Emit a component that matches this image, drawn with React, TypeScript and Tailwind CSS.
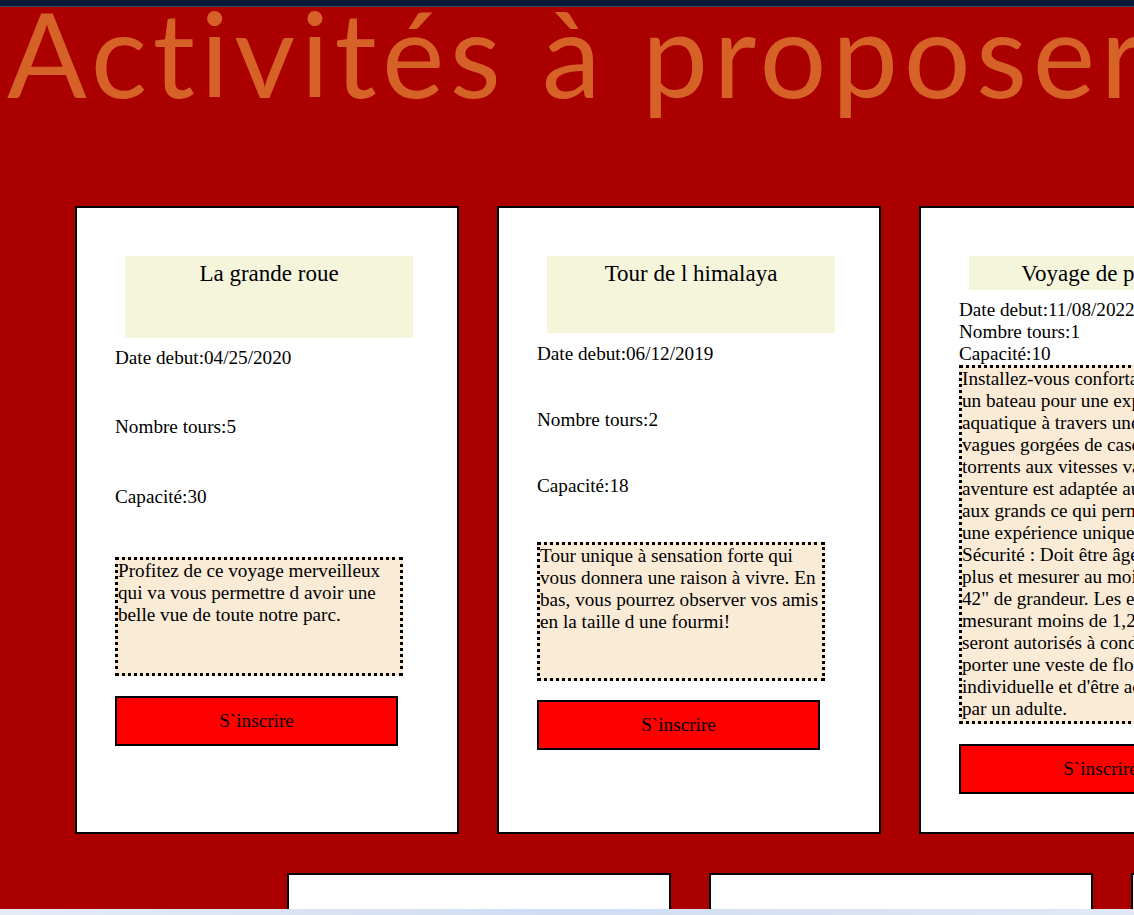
import React from 'react';

type Activity = {
  id: string;
  title: string;
  date: string;
  tours: number;
  capacite: number;
  lines: string[];
  titleCls: string;
  dateCls: string;
  toursCls: string;
  capCls: string;
  descCls: string;
  btnCls: string;
};

const ACTIVITIES: Activity[] = [
  {
    id: 'a1',
    title: 'La grande roue',
    date: '04/25/2020',
    tours: 5,
    capacite: 30,
    lines: [
      'Profitez de ce voyage merveilleux',
      'qui va vous permettre d avoir une',
      'belle vue de toute notre parc.',
    ],
    titleCls: 'mt-[48px] h-[82px]',
    dateCls: 'mt-[9px]',
    toursCls: 'mt-[47px]',
    capCls: 'mt-[48px]',
    descCls: 'mt-[49px] h-[119px]',
    btnCls: 'mt-[20px]',
  },
  {
    id: 'a2',
    title: 'Tour de l himalaya',
    date: '06/12/2019',
    tours: 2,
    capacite: 18,
    lines: [
      'Tour unique à sensation forte qui',
      'vous donnera une raison à vivre. En',
      'bas, vous pourrez observer vos amis',
      'en la taille d une fourmi!',
    ],
    titleCls: 'mt-[48px] h-[77px]',
    dateCls: 'mt-[10px]',
    toursCls: 'mt-[44px]',
    capCls: 'mt-[44px]',
    descCls: 'mt-[45px] h-[139px]',
    btnCls: 'mt-[19px]',
  },
  {
    id: 'a3',
    title: 'Voyage de plaisance',
    date: '11/08/2022',
    tours: 1,
    capacite: 10,
    lines: [
      'Installez-vous confortablement dans',
      'un bateau pour une expédition',
      'aquatique à travers une rivière de',
      'vagues gorgées de cascades et de',
      'torrents aux vitesses variables. Cette',
      'aventure est adaptée aux petits comme',
      'aux grands ce qui permet de vivre',
      'une expérience unique en famille.',
      'Sécurité : Doit être âgé de 3 ans et',
      'plus et mesurer au moins 1,07 m /',
      '42" de grandeur. Les enfants',
      'mesurant moins de 1,2 m / 48" ne',
      'seront autorisés à condition de',
      'porter une veste de flottaison',
      "individuelle et d'être accompagnés",
      'par un adulte.',
    ],
    titleCls: 'mt-[48px] h-[34px] pl-[4px]',
    dateCls: 'mt-[9px]',
    toursCls: 'mt-0',
    capCls: 'mt-0',
    descCls: 'mt-0 h-[359px]',
    btnCls: 'mt-[20px]',
  },
];

const ActivityCard: React.FC<{ a: Activity }> = ({ a }) => (
  <div className="shrink-0 w-[384px] h-[628px] border-2 border-black bg-white pl-[38px] flex flex-col items-start">
    <div className={`ml-[10px] w-[288px] shrink-0 bg-[#f5f5dc] pt-[5px] text-center text-[23px] leading-[26px] whitespace-nowrap ${a.titleCls}`}>
      {a.title}
    </div>
    <p className={`whitespace-nowrap ${a.dateCls}`}>Date debut:{a.date}</p>
    <p className={`whitespace-nowrap ${a.toursCls}`}>Nombre tours:{a.tours}</p>
    <p className={`whitespace-nowrap ${a.capCls}`}>Capacité:{a.capacite}</p>
    <div className={`w-[288px] shrink-0 bg-[#faebd7] border-[3px] border-dotted border-black ${a.descCls}`}>
      {a.lines.map((l, i) => (
        <div key={i} className="whitespace-nowrap">{l}</div>
      ))}
    </div>
    <button className={`w-[283px] h-[50px] shrink-0 bg-[#ff0000] border-2 border-black text-black ${a.btnCls}`}>
      S`inscrire
    </button>
  </div>
);

const EmptyCard: React.FC = () => (
  <div className="shrink-0 w-[384px] h-[628px] border-2 border-black bg-white" />
);

export default function App() {
  return (
    <div className="relative w-[1134px] h-[915px] overflow-hidden bg-[#aa0000] text-black font-['Liberation_Serif',serif] text-[19.2px] leading-[22px]">
      <div className="h-[7px] bg-[#0c1a35] border-b border-[#3b4b66]" />

      <h1 className="font-['Lato',sans-serif] text-[118px] leading-[92px] tracking-[5.5px] text-[#d66228] whitespace-nowrap pl-[7px]">
        Activités à proposer
      </h1>

      <div className="flex gap-[38px] pl-[75px] mt-[107px]">
        {ACTIVITIES.map(a => (
          <ActivityCard key={a.id} a={a} />
        ))}
      </div>

      <div className="flex gap-[38px] pl-[287px] mt-[39px]">
        <EmptyCard />
        <EmptyCard />
        <EmptyCard />
      </div>

      {/* bottom strip over the page */}
      <div className="absolute left-0 right-0 bottom-0 h-[6px] bg-gradient-to-r from-[#e6ecf6] via-[#cfdcf2] to-[#e2e9f5]" />
    </div>
  );
}
